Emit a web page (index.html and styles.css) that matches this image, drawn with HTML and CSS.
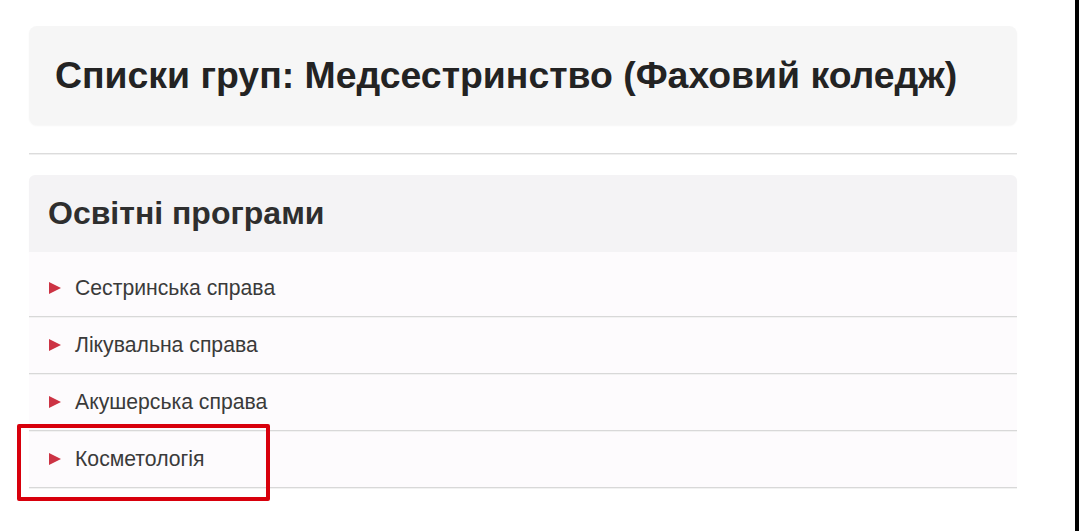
FILE: index.html
```html
<!DOCTYPE html>
<html lang="uk">
<head>
<meta charset="utf-8">
<link rel="stylesheet" href="styles.css">
</head>
<body>
<div class="frame">
  <main class="page">
    <div class="title-box">
      <h1 class="title">Списки груп: Медсестринство (Фаховий коледж)</h1>
    </div>
    <hr class="divider">
    <section class="panel">
      <div class="panel-head">
        <h2 class="panel-title">Освітні програми</h2>
      </div>
      <ul class="list">
        <li class="item"><span class="arrow"></span><span class="label">Сестринська справа</span></li>
        <li class="item"><span class="arrow"></span><span class="label">Лікувальна справа</span></li>
        <li class="item"><span class="arrow"></span><span class="label">Акушерська справа</span></li>
        <li class="item marked"><span class="arrow"></span><span class="label">Косметологія</span><span class="highlight"></span></li>
      </ul>
    </section>
  </main>
</div>
</body>
</html>
```
FILE: styles.css
```css
html, body {
  margin: 0;
  padding: 0;
  background: #ffffff;
}
body {
  font-family: "Liberation Sans", Arial, sans-serif;
}
.frame {
  width: 1079px;
  height: 531px;
  box-sizing: border-box;
  border-right: 4px solid #000;
  overflow: hidden;
}
.page {
  width: 988px;
  margin-left: 29px;
  padding-top: 26px;
}
.title-box {
  height: 99px;
  background: #f6f6f6;
  border-radius: 8px;
  box-shadow: 0 1px 2px rgba(0,0,0,0.04);
  display: flex;
  align-items: center;
  padding-left: 26px;
  box-sizing: border-box;
}
.title {
  margin: 0;
  font-size: 37.4px;
  font-weight: bold;
  color: #232323;
}
.divider {
  margin: 28px 0 21px;
  border: 0;
  height: 1px;
  background: #dcdcdc;
  box-shadow: 0 1px 0 #f0f0f0;
}
.panel-head {
  height: 77px;
  background: #f4f3f5;
  border-radius: 6px 6px 0 0;
  display: flex;
  align-items: center;
  padding-left: 19px;
  box-sizing: border-box;
  box-shadow: 0 1px 1px rgba(0,0,0,0.05);
}
.panel-title {
  margin: 0;
  font-size: 32px;
  font-weight: bold;
  color: #2e2e2e;
}
.list {
  list-style: none;
  margin: 0;
  padding: 8px 0 0;
  background: #fdfbfd;
}
.item {
  position: relative;
  height: 56px;
  display: flex;
  align-items: center;
  padding-left: 20px;
  border-bottom: 1px solid #d8d8d8;
  box-shadow: 0 1px 0 #f2f2f2;
}
.arrow {
  width: 0;
  height: 0;
  border-top: 6px solid transparent;
  border-bottom: 6px solid transparent;
  border-left: 12px solid #cc3344;
  margin-right: 14px;
}
.label {
  font-size: 21.2px;
  color: #3a3a3a;
}
.highlight {
  position: absolute;
  left: -12px;
  top: -7px;
  width: 245px;
  height: 69px;
  border: 4px solid #d8000c;
  border-radius: 2px;
}
```
